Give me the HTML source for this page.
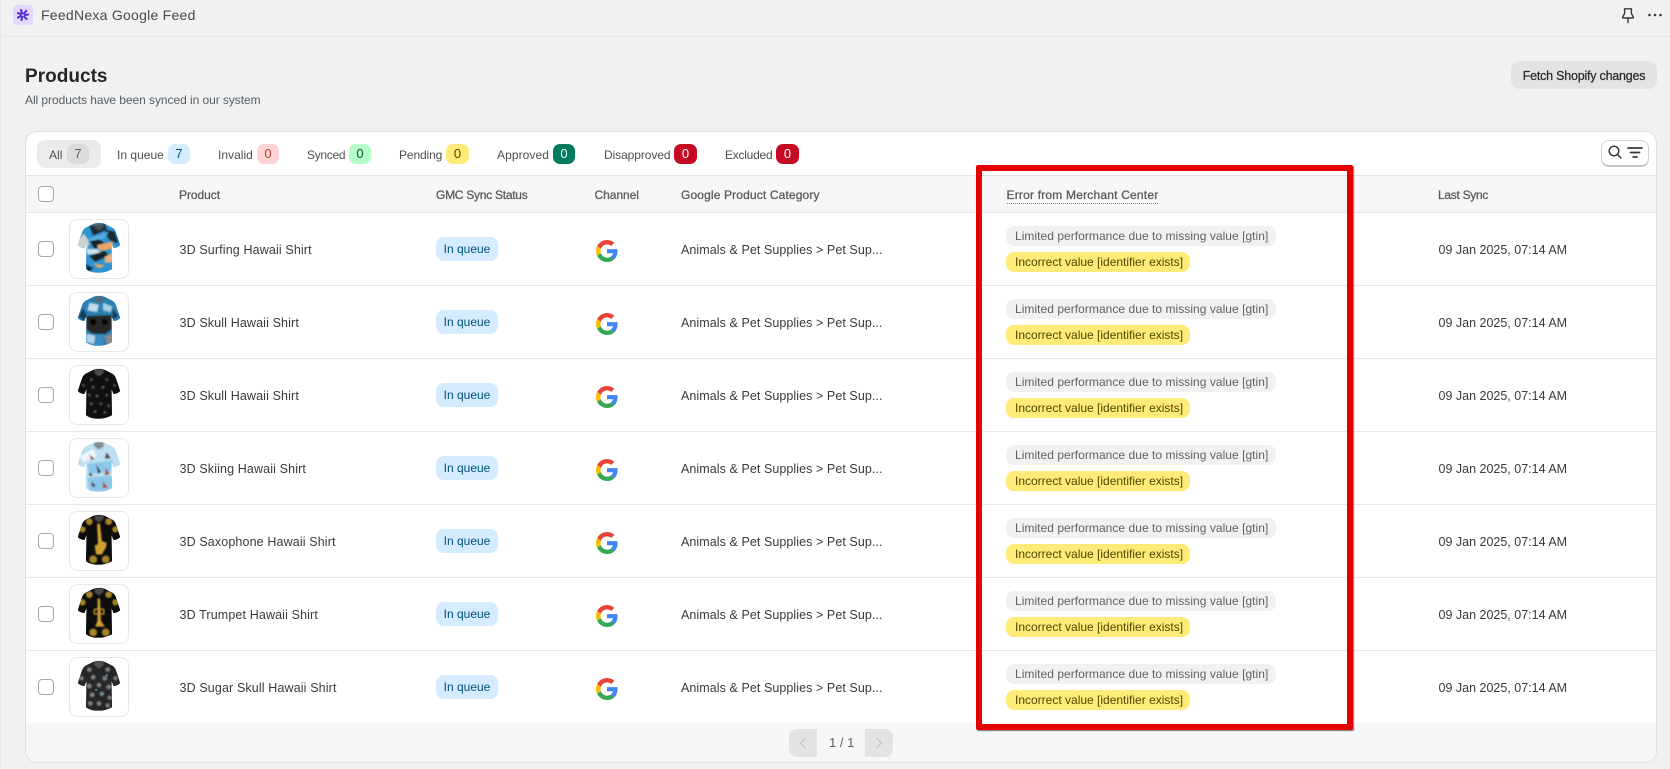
<!DOCTYPE html>
<html lang="en"><head><meta charset="utf-8"><title>FeedNexa Google Feed</title>
<style>
*{box-sizing:border-box}
html,body{margin:0;padding:0;width:1670px;height:769px;overflow:hidden;background:#f1f1f1;font-family:"Liberation Sans",sans-serif;color:#303030}
.a{position:absolute;white-space:nowrap}
.t{position:absolute;white-space:nowrap;line-height:20px;height:20px}
.card{position:absolute;left:25px;top:131px;width:1632px;height:632px;background:#fff;border:1px solid #e0e0e0;border-radius:12px;overflow:hidden}
.b{position:absolute;top:144px;height:20px;width:22px;border-radius:7px;text-align:center;font-size:13px;line-height:20px}
.tab{position:absolute;top:145px;font-size:12px;line-height:20px;color:#4f4f4f;white-space:nowrap;letter-spacing:.02px}
.h{position:absolute;top:185px;font-size:12px;line-height:20px;color:#5c5c5c;white-space:nowrap;-webkit-text-stroke:.3px #5c5c5c;letter-spacing:-.05px}
.r{position:absolute;left:26px;width:1630px;height:73px;border-top:1px solid #e8e8e8;background:#fff}
.cb{position:absolute;left:12px;top:28px;width:16px;height:16px;border:1.5px solid #a8a8a8;border-radius:4px;background:#fff}
.th{position:absolute;left:43px;top:6px;width:60px;height:60px;border:1px solid #e8e8e8;border-radius:8px;background:#fff;overflow:hidden}
.th svg{display:block;width:58px;height:58px}
.n{position:absolute;left:153.5px;top:27px;font-size:12.5px;line-height:20px;color:#3a3a3a;white-space:nowrap;letter-spacing:.13px}
.q{position:absolute;left:410px;top:24px;width:62px;height:24px;background:#d5ebff;border-radius:8px;font-size:12px;line-height:24px;text-align:center;color:#00527c}
.g{position:absolute;left:570px;top:27px;width:22px;height:22px}
.c{position:absolute;left:655px;top:27px;font-size:12.5px;line-height:20px;color:#3a3a3a;white-space:nowrap;letter-spacing:.07px}
.p1{position:absolute;left:980px;top:13px;width:270px;height:20px;background:#f1f1f1;border-radius:8px;font-size:12px;line-height:21px;padding-left:9px;color:#616161;white-space:nowrap;letter-spacing:.04px}
.p2{position:absolute;left:980px;top:39px;width:184px;height:20px;background:#ffeb78;border-radius:8px;font-size:12px;line-height:21px;padding-left:9px;color:#4f4700;white-space:nowrap;letter-spacing:0}
.d{position:absolute;left:1412.5px;top:27px;font-size:12.5px;line-height:20px;color:#3a3a3a;white-space:nowrap;letter-spacing:0}
</style></head><body>

<svg width="0" height="0" style="position:absolute"><defs>
<symbol id="G" viewBox="0 0 48 48">
<path fill="#EA4335" d="M24 9.5c3.54 0 6.71 1.22 9.21 3.6l6.85-6.85C35.9 2.38 30.47 0 24 0 14.62 0 6.51 5.38 2.56 13.22l7.98 6.19C12.43 13.72 17.74 9.5 24 9.5z"/>
<path fill="#4285F4" d="M46.98 24.55c0-1.57-.15-3.09-.38-4.55H24v9.02h12.94c-.58 2.96-2.26 5.48-4.78 7.18l7.73 6c4.51-4.18 7.09-10.36 7.09-17.65z"/>
<path fill="#FBBC05" d="M10.53 28.59c-.48-1.45-.76-2.99-.76-4.59s.27-3.14.76-4.59l-7.98-6.19C.92 16.46 0 20.12 0 24c0 3.88.92 7.54 2.56 10.78l7.97-6.19z"/>
<path fill="#34A853" d="M24 48c6.48 0 11.93-2.13 15.89-5.81l-7.73-6c-2.15 1.45-4.92 2.3-8.16 2.3-6.26 0-11.57-4.22-13.47-9.91l-7.98 6.19C6.51 42.62 14.62 48 24 48z"/>
</symbol>
<clipPath id="sh"><path d="M24 4 Q30 2 36 4 L44 8 Q47 10 48 14 L52 26 Q49 29 45 29 L43 24 L43.5 51 Q36 55 29 54.5 Q22 55 16.5 51 L17 24 L15 29 Q11 29 8 26 L12 14 Q13 10 16 8Z"/></clipPath>
<filter id="bl" x="-10%" y="-10%" width="120%" height="120%"><feGaussianBlur stdDeviation=".8"/></filter>
<symbol id="collar" viewBox="0 0 60 60"><path d="M25.5 3.5 L34.5 3.5 L35 7 L31 10.5 L29 10.5 L25 7Z" fill="#666" opacity=".7" filter="url(#bl)"/></symbol>
</defs></svg>

<!-- top bar -->
<div class="a" style="left:0;top:0;width:1670px;height:37px;border-bottom:1px solid #e6e6e6;border-left:1px solid #e6e6e6"></div>
<div class="a" style="left:0;top:37px;width:1px;height:732px;background:#e6e6e6"></div>
<svg class="a" style="left:13px;top:5px" width="20" height="20" viewBox="0 0 20 20"><rect width="20" height="20" rx="4" fill="#e3d8ff"/><g stroke="#5a2fd0" stroke-width="2.1" stroke-linecap="round"><path d="M9.3 8.5 L8 5"/><path d="M11 8.5 L13.3 5.8"/><path d="M12 10 L15 9.5"/><path d="M11 11.5 L13.6 14"/><path d="M9 12 L8.6 15"/><path d="M8 10.8 L5 12.6"/><path d="M7.8 9 L5 8"/></g></svg>
<div class="t" style="left:41px;top:5px;font-size:14px;color:#4a4a4a;letter-spacing:.26px">FeedNexa Google Feed</div>
<svg class="a" style="left:1620px;top:7px" width="16" height="17" viewBox="0 0 16 17" fill="none" stroke="#3a3a3a" stroke-width="1.4"><path d="M4.6 1.8 H11.4 V6.5 L13.4 10.2 Q13.5 11 12.7 11 H3.3 Q2.5 11 2.6 10.2 L4.6 6.5Z" stroke-linejoin="round"/><path d="M8 11 V15.5" stroke-linecap="round"/></svg>
<svg class="a" style="left:1647px;top:12px" width="16" height="6" viewBox="0 0 16 6" fill="#3a3a3a"><circle cx="2.5" cy="3" r="1.3"/><circle cx="8" cy="3" r="1.3"/><circle cx="13.5" cy="3" r="1.3"/></svg>

<!-- page header -->
<div class="t" style="left:25px;top:67px;font-size:19px;font-weight:700;color:#262626;letter-spacing:.02px">Products</div>
<div class="t" style="left:25px;top:90px;font-size:12px;color:#566068;letter-spacing:-.06px">All products have been synced in our system</div>
<div class="a" style="left:1511px;top:61px;width:146px;height:28px;background:#e3e3e3;border-radius:9px;font-size:12.5px;line-height:30px;text-align:center;color:#2b2b2b;-webkit-text-stroke:.25px #2b2b2b;letter-spacing:-.22px">Fetch Shopify changes</div>

<!-- card -->
<div class="card"></div>
<div class="a" style="left:26px;top:175px;width:1630px;height:38px;background:#f7f7f7;border-top:1px solid #e3e3e3;border-bottom:1px solid #e3e3e3"></div>
<div class="a" style="left:26px;top:723px;width:1630px;height:39px;background:#f7f7f7;border-radius:0 0 11px 11px"></div>

<!-- tabs -->
<div class="a" style="left:37px;top:140px;width:64px;height:28px;background:#ebebeb;border-radius:8px"></div>
<div class="tab" style="left:49px">All</div><div class="b" style="left:67px;background:#dcdcdc;color:#616161">7</div>
<div class="tab" style="left:117px">In queue</div><div class="b" style="left:168px;background:#d5ebff;color:#00527c">7</div>
<div class="tab" style="left:218px">Invalid</div><div class="b" style="left:257px;background:#ffd3d3;color:#b0402c">0</div>
<div class="tab" style="left:307px;letter-spacing:-.3px">Synced</div><div class="b" style="left:349px;background:#b4fec5;color:#0c5132">0</div>
<div class="tab" style="left:399px;letter-spacing:-.12px">Pending</div><div class="b" style="left:446px;width:23px;background:#ffeb78;color:#4f4700">0</div>
<div class="tab" style="left:497px;letter-spacing:.08px">Approved</div><div class="b" style="left:553px;background:#047b5d;color:#e8fff5">0</div>
<div class="tab" style="left:604px;letter-spacing:-.08px">Disapproved</div><div class="b" style="left:674px;width:23px;background:#c70a24;color:#fff">0</div>
<div class="tab" style="left:725px;letter-spacing:-.25px">Excluded</div><div class="b" style="left:776px;width:23px;background:#c70a24;color:#fff">0</div>

<div class="a" style="left:1601px;top:140px;width:48px;height:27px;background:#fff;border:1px solid #d0d0d0;border-bottom:2px solid #c4c4c4;border-radius:8px"></div>
<svg class="a" style="left:1607px;top:145px" width="38" height="18" viewBox="0 0 38 18" fill="none" stroke="#3a3a3a" stroke-width="1.5" stroke-linecap="round"><circle cx="7" cy="6" r="4.8"/><path d="M10.6 9.6 L14 13"/><path d="M21 3 H35" stroke-width="1.7"/><path d="M23.5 7.5 H32.5" stroke-width="1.7"/><path d="M26.2 12 H30" stroke-width="1.7"/></svg>

<!-- headers -->
<div class="a" style="left:38px;top:186px;width:16px;height:16px;border:1.5px solid #a8a8a8;border-radius:4px;background:#fff"></div>
<div class="h" style="left:179px">Product</div>
<div class="h" style="left:436px;letter-spacing:-.26px">GMC Sync Status</div>
<div class="h" style="left:594.5px">Channel</div>
<div class="h" style="left:681px;letter-spacing:.14px">Google Product Category</div>
<div class="h" style="left:1006.5px;height:18.5px;border-bottom:1px dotted #8a8a8a;line-height:20px;letter-spacing:.2px">Error from Merchant Center</div>
<div class="h" style="left:1438px;letter-spacing:-.29px">Last Sync</div>

<!-- rows -->
<div class="r" style="top:212px"><div class="cb"></div>
<div class="th"><svg viewBox="0 0 60 60"><g clip-path="url(#sh)"><rect width="60" height="60" fill="#2f94d0"/><g filter="url(#bl)"><path d="M20 6 L36 4 L38 10 L24 16Z" fill="#1c2c38"/><path d="M36 10 L46 12 L50 24 L42 22 L38 16Z" fill="#1a2a36"/><path d="M8 22 L14 14 L20 22 L18 30 L8 28Z" fill="#cfd3cc"/><path d="M18 20 L40 12 L36 18 L20 26Z" fill="#58aede"/><path d="M20 22 L30 20 L36 24 L26 30Z" fill="#15202a"/><path d="M28 26 L44 22 L44 30 L30 32Z" fill="#e9a46a"/><path d="M17 30 L28 30 L32 34 L18 36Z" fill="#cfe0e8"/><path d="M20 37 L36 32 L40 37 L26 43Z" fill="#12202a"/><path d="M36 38 L44 34 L44 44 L36 44Z" fill="#e8b088"/><path d="M24 45 L36 47 L30 50Z" fill="#f0a868"/><path d="M17 46 L24 50 L18 54Z" fill="#14222c"/></g></g><use href="#collar" width="60" height="60"/></svg></div>
<div class="n">3D Surfing Hawaii Shirt</div><div class="q">In queue</div><svg class="g"><use href="#G" width="22" height="22"/></svg><div class="c">Animals &amp; Pet Supplies &gt; Pet Sup...</div><div class="p1">Limited performance due to missing value [gtin]</div><div class="p2">Incorrect value [identifier exists]</div><div class="d">09 Jan 2025, 07:14 AM</div></div>

<div class="r" style="top:285px"><div class="cb"></div>
<div class="th"><svg viewBox="0 0 60 60"><g clip-path="url(#sh)"><rect width="60" height="60" fill="#2a7fb2"/><g filter="url(#bl)"><path d="M20 10 L30 12 L28 20 L18 18Z" fill="#c4dcea"/><path d="M34 10 L44 14 L42 20 L34 18Z" fill="#a8cfe4"/><path d="M9 24 L14 16 L17 24 L14 28Z" fill="#123a55"/><path d="M44 16 L50 24 L44 27Z" fill="#123a55"/><path d="M17 24 L43 23 L43 37 L37 42 L23 42 L17 37Z" fill="#262626"/><circle cx="24" cy="30" r="3.2" fill="#060606"/><circle cx="36" cy="30" r="3.2" fill="#060606"/><path d="M17 42 L26 44 L25 53 L17 51Z" fill="#b8d4e4"/><path d="M36 44 L44 42 L44 51 L38 54Z" fill="#8a8a8a"/><path d="M26 44 L36 44 L34 55 L26 55Z" fill="#3a8cc0"/></g></g><use href="#collar" width="60" height="60"/></svg></div>
<div class="n">3D Skull Hawaii Shirt</div><div class="q">In queue</div><svg class="g"><use href="#G" width="22" height="22"/></svg><div class="c">Animals &amp; Pet Supplies &gt; Pet Sup...</div><div class="p1">Limited performance due to missing value [gtin]</div><div class="p2">Incorrect value [identifier exists]</div><div class="d">09 Jan 2025, 07:14 AM</div></div>

<div class="r" style="top:358px"><div class="cb"></div>
<div class="th"><svg viewBox="0 0 60 60"><g clip-path="url(#sh)"><rect width="60" height="60" fill="#101010"/><g fill="#5e5e5e" filter="url(#bl)"><circle cx="22" cy="14" r="1.4"/><circle cx="38" cy="14" r="1.4"/><circle cx="14" cy="20" r="1.3"/><circle cx="46" cy="20" r="1.3"/><circle cx="24" cy="22" r="1.5"/><circle cx="34" cy="22" r="1.5"/><circle cx="20" cy="30" r="1.4"/><circle cx="28" cy="31" r="1.5"/><circle cx="38" cy="30" r="1.4"/><circle cx="22" cy="39" r="1.5"/><circle cx="32" cy="39" r="1.4"/><circle cx="40" cy="41" r="1.4"/><circle cx="26" cy="47" r="1.4"/><circle cx="36" cy="48" r="1.4"/></g></g><use href="#collar" width="60" height="60"/></svg></div>
<div class="n">3D Skull Hawaii Shirt</div><div class="q">In queue</div><svg class="g"><use href="#G" width="22" height="22"/></svg><div class="c">Animals &amp; Pet Supplies &gt; Pet Sup...</div><div class="p1">Limited performance due to missing value [gtin]</div><div class="p2">Incorrect value [identifier exists]</div><div class="d">09 Jan 2025, 07:14 AM</div></div>

<div class="r" style="top:431px"><div class="cb"></div>
<div class="th"><svg viewBox="0 0 60 60"><g clip-path="url(#sh)"><rect width="60" height="60" fill="#bcdff2"/><g filter="url(#bl)"><path d="M10 18 L24 10 L28 18 L14 24Z" fill="#eef6fb"/><path d="M18 26 L44 22 L42 34 L20 36Z" fill="#8cc6e8"/><path d="M18 40 L44 38 L44 54 L20 54Z" fill="#8cc6e8"/><path d="M20 16 L25 20 L22 22Z" fill="#8a4a3a"/><path d="M38 14 L42 20 L36 20Z" fill="#5a4a4a"/><path d="M27 26 L32 34 L29 36Z" fill="#3a3a4a"/><path d="M37 30 L41 36 L36 38Z" fill="#a85a3a"/><path d="M22 44 L27 48 L23 50Z" fill="#5a3a3a"/><path d="M34 44 L39 50 L34 51Z" fill="#b04a2a"/><path d="M20 34 L24 38 L20 38Z" fill="#444"/></g></g><use href="#collar" width="60" height="60"/></svg></div>
<div class="n">3D Skiing Hawaii Shirt</div><div class="q">In queue</div><svg class="g"><use href="#G" width="22" height="22"/></svg><div class="c">Animals &amp; Pet Supplies &gt; Pet Sup...</div><div class="p1">Limited performance due to missing value [gtin]</div><div class="p2">Incorrect value [identifier exists]</div><div class="d">09 Jan 2025, 07:14 AM</div></div>

<div class="r" style="top:504px"><div class="cb"></div>
<div class="th"><svg viewBox="0 0 60 60"><g clip-path="url(#sh)"><rect width="60" height="60" fill="#0c0c0c"/><g filter="url(#bl)"><circle cx="20" cy="10" r="3.5" fill="#a8852a"/><circle cx="40" cy="10" r="3.5" fill="#a8852a"/><circle cx="13" cy="18" r="3.2" fill="#a8851f"/><circle cx="47" cy="18" r="3.2" fill="#a8851f"/><circle cx="24" cy="49" r="4" fill="#a8852a"/><circle cx="37" cy="49" r="4" fill="#a8852a"/><path d="M28 12 L31 12 L33 30 L38 32 L37 37 L33 44 L27 44 L25.5 35 L29 33Z" fill="#d0a030"/></g></g><use href="#collar" width="60" height="60"/></svg></div>
<div class="n">3D Saxophone Hawaii Shirt</div><div class="q">In queue</div><svg class="g"><use href="#G" width="22" height="22"/></svg><div class="c">Animals &amp; Pet Supplies &gt; Pet Sup...</div><div class="p1">Limited performance due to missing value [gtin]</div><div class="p2">Incorrect value [identifier exists]</div><div class="d">09 Jan 2025, 07:14 AM</div></div>

<div class="r" style="top:577px"><div class="cb"></div>
<div class="th"><svg viewBox="0 0 60 60"><g clip-path="url(#sh)"><rect width="60" height="60" fill="#0c0c0c"/><g filter="url(#bl)"><circle cx="20" cy="10" r="3.5" fill="#a8852a"/><circle cx="40" cy="10" r="3.5" fill="#a8852a"/><circle cx="13" cy="18" r="3.2" fill="#a8851f"/><circle cx="47" cy="18" r="3.2" fill="#a8851f"/><circle cx="24" cy="49" r="4" fill="#a8852a"/><circle cx="37" cy="49" r="4" fill="#a8852a"/><path d="M28.5 14 L31 14 L32 37 L36 43 L26 43 L28.5 37Z" fill="#d0a030"/><rect x="25" y="25" width="10" height="5" rx="1" fill="none" stroke="#c89a2c" stroke-width="1.4"/></g></g><use href="#collar" width="60" height="60"/></svg></div>
<div class="n">3D Trumpet Hawaii Shirt</div><div class="q">In queue</div><svg class="g"><use href="#G" width="22" height="22"/></svg><div class="c">Animals &amp; Pet Supplies &gt; Pet Sup...</div><div class="p1">Limited performance due to missing value [gtin]</div><div class="p2">Incorrect value [identifier exists]</div><div class="d">09 Jan 2025, 07:14 AM</div></div>

<div class="r" style="top:650px"><div class="cb"></div>
<div class="th"><svg viewBox="0 0 60 60"><g clip-path="url(#sh)"><rect width="60" height="60" fill="#262626"/><g fill="#7c8286" filter="url(#bl)"><circle cx="20" cy="12" r="2.4"/><circle cx="39" cy="12" r="2.4"/><circle cx="12" cy="21" r="2.2"/><circle cx="47" cy="21" r="2.2"/><circle cx="24" cy="20" r="2.5"/><circle cx="36" cy="21" r="2.5"/><circle cx="20" cy="29" r="2.5"/><circle cx="30" cy="28" r="2.4"/><circle cx="40" cy="30" r="2.5"/><circle cx="23" cy="38" r="2.5"/><circle cx="33" cy="37" r="2.4"/><circle cx="41" cy="41" r="2.2"/><circle cx="21" cy="47" r="2.4"/><circle cx="30" cy="47" r="2.4"/><circle cx="39" cy="49" r="2.2"/></g><circle cx="38" cy="18" r="1" fill="#5cb0d8"/><circle cx="27" cy="33" r="1" fill="#5cb0d8"/></g><use href="#collar" width="60" height="60"/></svg></div>
<div class="n">3D Sugar Skull Hawaii Shirt</div><div class="q">In queue</div><svg class="g"><use href="#G" width="22" height="22"/></svg><div class="c">Animals &amp; Pet Supplies &gt; Pet Sup...</div><div class="p1">Limited performance due to missing value [gtin]</div><div class="p2">Incorrect value [identifier exists]</div><div class="d">09 Jan 2025, 07:14 AM</div></div>

<!-- pagination -->
<div class="a" style="left:789px;top:729px;width:28px;height:28px;background:#e3e3e3;border-radius:8px 0 0 8px"></div>
<svg class="a" style="left:797px;top:736px" width="12" height="14" viewBox="0 0 12 14" fill="none" stroke="#c4c4c4" stroke-width="1.3" stroke-linecap="round" stroke-linejoin="round"><path d="M8 2.5 L3.5 7 L8 11.5"/></svg>
<div class="t" style="left:829px;top:733px;width:24px;font-size:13px;color:#616161;text-align:center">1 / 1</div>
<div class="a" style="left:865px;top:729px;width:28px;height:28px;background:#e3e3e3;border-radius:0 8px 8px 0"></div>
<svg class="a" style="left:873px;top:736px" width="12" height="14" viewBox="0 0 12 14" fill="none" stroke="#c4c4c4" stroke-width="1.3" stroke-linecap="round" stroke-linejoin="round"><path d="M4 2.5 L8.5 7 L4 11.5"/></svg>

<!-- red highlight -->
<div class="a" style="left:976px;top:165px;width:377px;height:565px;border:6px solid #e50000;border-radius:2px;box-shadow:1px 1px 1px rgba(60,60,60,.7)"></div>
</body></html>
